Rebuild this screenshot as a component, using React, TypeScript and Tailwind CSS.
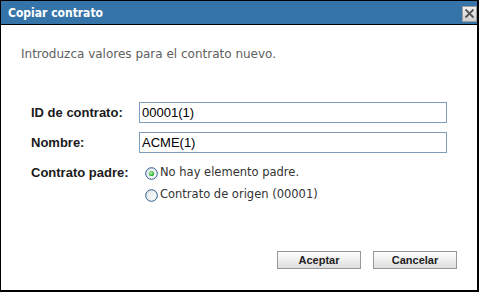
import React from 'react';

const Radio = ({ checked }: { checked?: boolean }) => (
  <svg width="13" height="13" viewBox="0 0 13 13" className="shrink-0">
    <defs>
      <linearGradient id="rg" x1="0" y1="0" x2="1" y2="1">
        <stop offset="0" stopColor="#dfe3e8" />
        <stop offset="1" stopColor="#ffffff" />
      </linearGradient>
      <radialGradient id="dot" cx="0.4" cy="0.4" r="0.6">
        <stop offset="0" stopColor="#b8f5a8" />
        <stop offset="1" stopColor="#1fa82c" />
      </radialGradient>
    </defs>
    <circle cx="6.5" cy="6.5" r="5.8" fill="url(#rg)" stroke="#2b5a8a" strokeWidth="1" />
    {checked && <circle cx="6.5" cy="6.5" r="2.6" fill="url(#dot)" />}
  </svg>
);

const App = () => {
  return (
    <div className="w-[479px] h-[292px] bg-white border-t border-l border-r-2 border-b-2 border-black flex flex-col">
      {/* Title bar */}
      <div className="h-[24px] bg-[#3574a9] border-b border-black flex items-center justify-between pl-[7px]">
        <span className="text-white font-bold text-[12px] font-['DejaVu_Sans_Condensed','DejaVu_Sans',sans-serif]">Copiar contrato</span>
        <button className="w-[15px] h-[16px] mt-[2px] bg-gradient-to-b from-[#f0f0f0] to-[#cfcfcf] border border-[#9c9c9c] flex items-center justify-center">
          <svg width="11" height="11" viewBox="0 0 11 11">
            <path d="M1.5 1.5 L9.5 9.5 M9.5 1.5 L1.5 9.5" stroke="#555" strokeWidth="1.8" />
          </svg>
        </button>
      </div>

      {/* Body */}
      <div className="flex-1 flex flex-col px-5 pt-[22px] pb-[21px]">
        <p className="text-[12px] leading-[15px] text-[#606060] font-['DejaVu_Sans',sans-serif]">
          Introduzca valores para el contrato nuevo.
        </p>

        <div className="mt-[40px] ml-[10px] grid grid-cols-[108px_308px] gap-y-[9px] items-center">
          <label className="text-[13px] font-bold text-[#1a1a1a] font-['Liberation_Sans',Arial,sans-serif]">ID de contrato:</label>
          <input
            readOnly
            value="00001(1)"
            className="h-[21px] border border-[#7f9db9] px-[2px] text-[13px] text-black font-['Liberation_Sans',Arial,sans-serif] outline-none"
          />

          <label className="text-[13px] font-bold text-[#1a1a1a] font-['Liberation_Sans',Arial,sans-serif]">Nombre:</label>
          <input
            readOnly
            value="ACME(1)"
            className="h-[21px] border border-[#7f9db9] px-[2px] text-[13px] text-black font-['Liberation_Sans',Arial,sans-serif] outline-none"
          />

          <label className="self-start h-[22px] flex items-center text-[13px] font-bold text-[#1a1a1a] font-['Liberation_Sans',Arial,sans-serif]">Contrato padre:</label>
          <div className="flex flex-col pl-[6px] text-[11.5px] text-[#333] font-['DejaVu_Sans',sans-serif]">
            <div className="h-[22px] flex items-center gap-[2px]">
              <Radio checked />
              <span>No hay elemento padre.</span>
            </div>
            <div className="h-[22px] flex items-center gap-[2px]">
              <Radio />
              <span>Contrato de origen (00001)</span>
            </div>
          </div>
        </div>

        <div className="mt-auto flex justify-end gap-3">
          {['Aceptar', 'Cancelar'].map(b => (
            <button
              key={b}
              className="w-[84px] h-[18px] bg-gradient-to-b from-[#ffffff] to-[#dedede] border border-[#989898] text-[11px] font-bold text-[#222] font-['Liberation_Sans',Arial,sans-serif] leading-none"
            >
              {b}
            </button>
          ))}
        </div>
      </div>
    </div>
  );
};

export default App;
